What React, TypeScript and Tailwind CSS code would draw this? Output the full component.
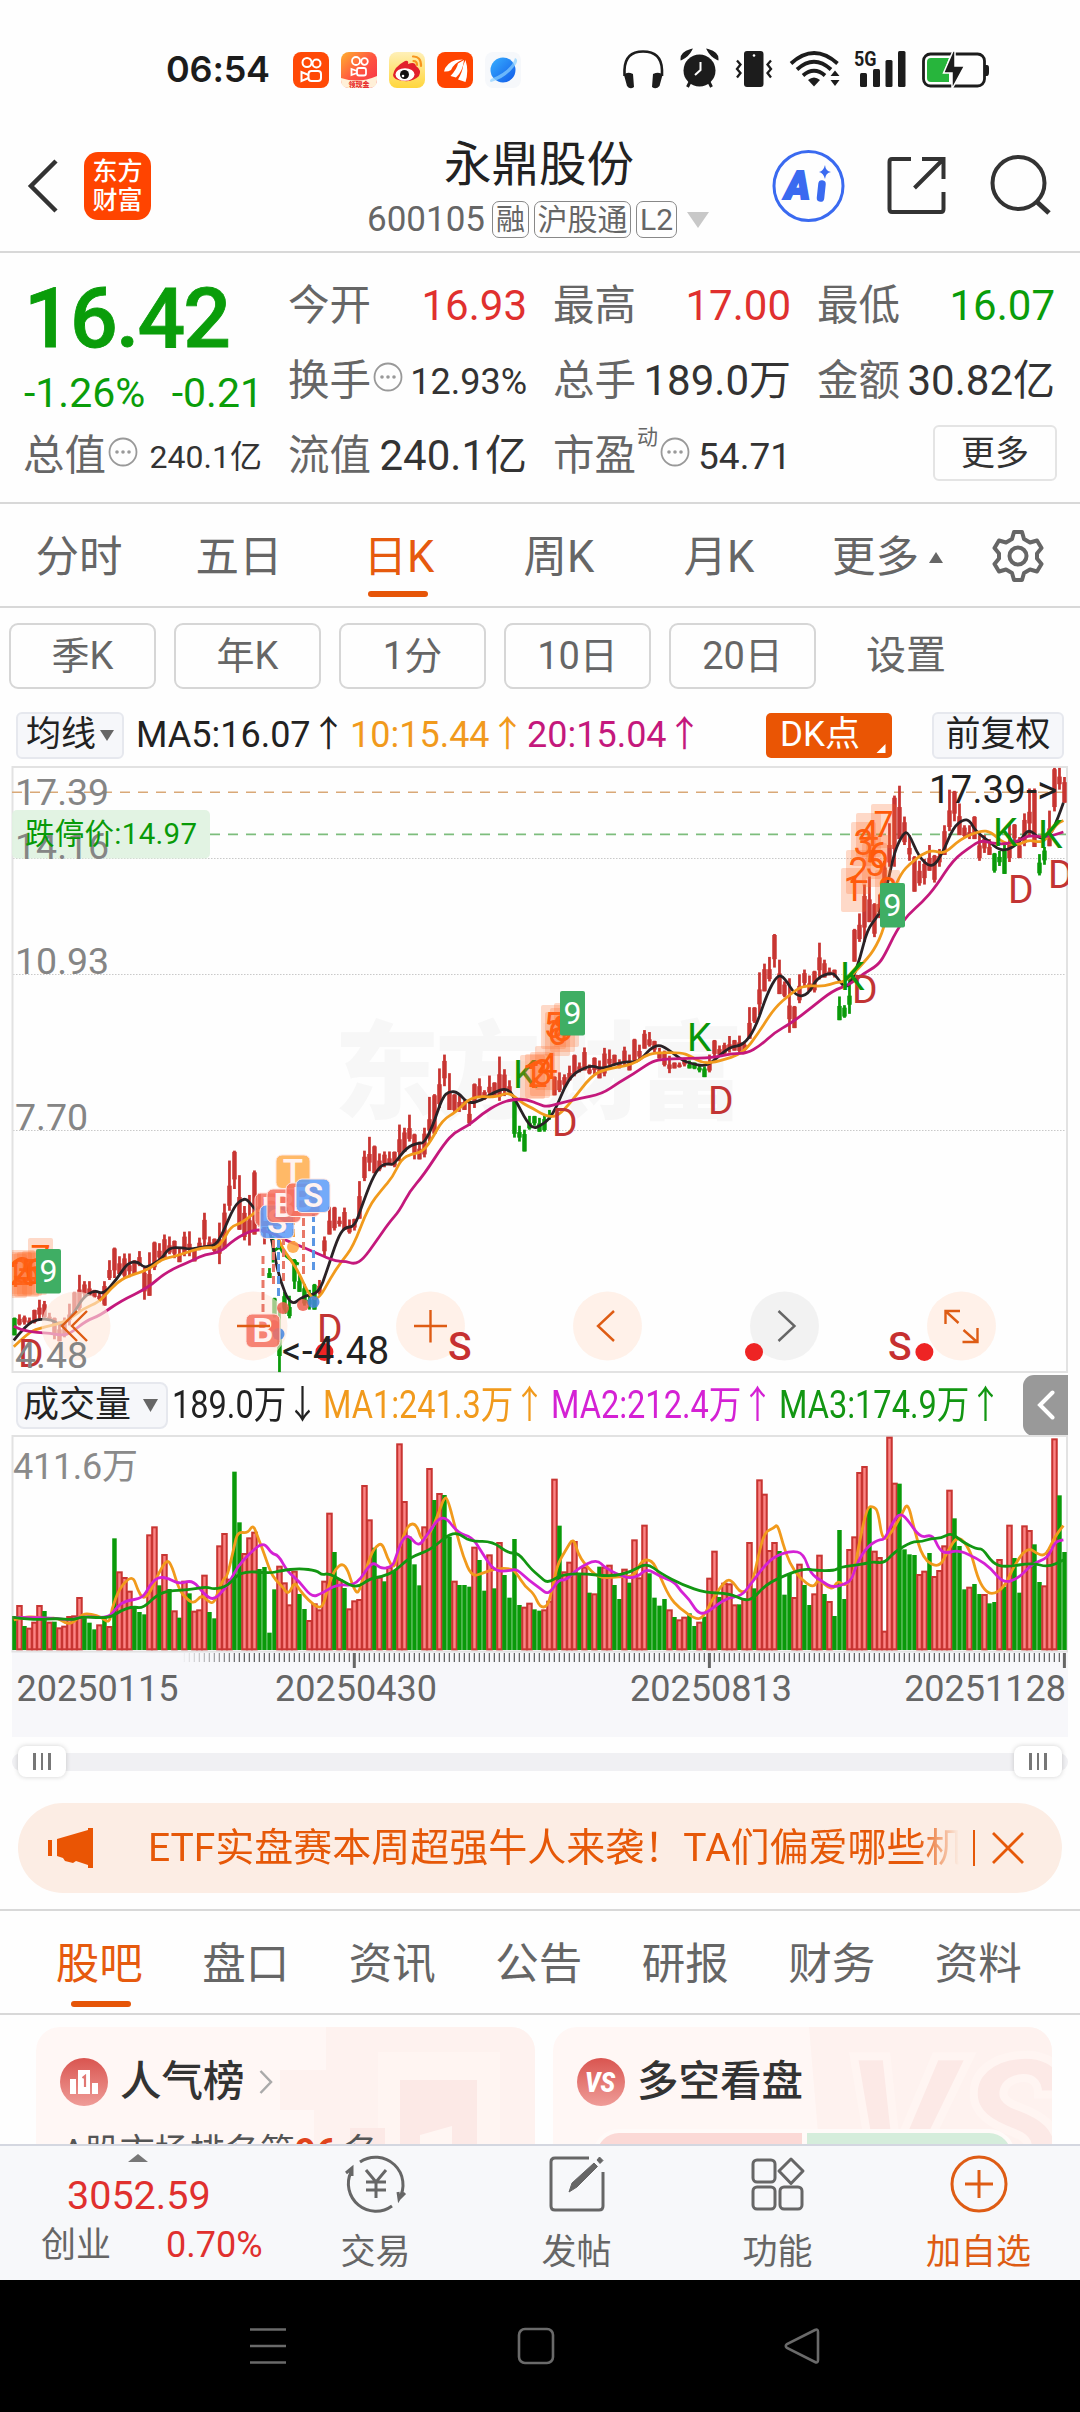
import type { ReactNode } from 'react';

const RED = '#c83532';
const GREEN = '#0a9a0a';

// Candles: high / low per trading day, chart units (y grows downwards)
const CANDLES =
  '1410 1455g,1402 1430,1405 1428,1410 1425,1390 1425,1365 1415,1368 1410,1398 1418,1410 1465,1420 1470,1410 1460,1375 1430,1345 1400,1302 1395,1318 1360,1318 1355,1340 1360,1345 1370,1318 1380,1265 1315,1233 1310,1255 1300,1248 1310,1248 1308,1265 1300,1242 1280,1280 1365,1245 1355,1218 1290,1222 1270,1200 1260,1205 1250,1215 1260,1235 1270,1193 1255,1192 1255,1235 1268,1208 1240,1145 1235,1205 1235,1210 1245,1170 1275,1122 1235,1013 1140,988 1085,1050 1188,1128 1215,1100 1228,1038 1200,1095 1180,1110 1225,1285 1310g,1360 1410g,1385 1548g,1345 1400g,1355 1412g,1262 1338g,1300 1345g,1325 1380g,1340 1390g,1325 1390g,1315 1352,1205 1255,1130 1200,1130 1190,1155 1180,1132 1188,1162 1198,1160 1190,1065 1160,988 1065,953 1040,975 1045,995 1040,990 1030,990 1025,990 1030,922 1015,930 990,897 965,945 1010,965 1010,930 1005,852 965,845 945,780 880,745 825,792 885,845 890,848 890,860 885,865 925,818 880,805 855,835 860,798 855,815 850,750 862,782 850,810 840,860 955g,925 965g,935 990g,900 935g,900 925g,905 940g,900 940g,885 910g,800 848,790 840,795 830,773 810,745 800,765 790,727 785,770 795,752 795,760 805,728 800,732 780,745 770,757 780,725 775,745 785,705 765,720 760,683 730,688 725,710 740,728 755,735 775,748 792,765 780,765 778,755 775,760 780g,765 782g,770 790g,775 802g,745 790,708 755,722 745,715 745,698 740,708 735,697 740,715 740,625 705,625 665,537 645,515 585,498 560,440 525,505 592,560 600,552 690,622 678,542 615,530 575,545 585,533 588,462 555,505 550,525 545,530 550,598 658g,620 652g,550 642g,427 510,388 460,315 460,295 410,362 448,340 400,255 340,160 270,90 270,65 200,143 215,190 255,243 333,255 318,250 315,215 280,240 310,225 270,165 240,75 180,78 155,110 190,165 195,165 200,142 200,190 255,190 235,200 240,235 285g,230 268g,215 288g,160 258,162 210,195 248,135 218,72 190,72 220,238 292g,220 265g,128 218,20 130,20 75,43 108';

const VOLUMES =
  'g768 r735 g798 r803 r785 r735 g753 r785 g785 r802 r797 r768 r766 r711 g768 g788 g808 r793 g775 r798 g535 r634 r651 r692 g738 g756 g763 r523 r499 g676 r582 g687 r751 g773 r662 g700 r752 r748 r644 g756 g775 r556 r519 r656 g335 g487 r579 r532 r515 g627 g621 g818 g688 r617 r667 r733 r632 g702 g747 r780 r730 r748 r662 r458 g576 r657 g684 r745 r721 r717 r375 r478 g563 r650 g664 r620 g633 r250 r423 g530 g613 g676 r499 r324 g420 r399 g405 g530 r662 g675 g675 g680 r560 g600 g692 r583 g685 r546 g645 g713 g537 g735 r740 r728 g748 g752 r748 r722 r356 g497 r634 r605 r543 g640 r620 g698 r700 g620 r620 r614 g675 g717 r626 g668 r538 r652 r494 g640 g713 g737 g717 r748 g771 r778 r770 g760 g798 r785 g770 r653 r572 g711 r668 r670 r733 g733 r715 r546 g685 r358 r401 r570 r546 g573 g704 g640 r711 r611 g675 g735 r700 r584 g702 r723 g768 g510 g717 r567 r529 r336 r318 g443 r572 r591 r812 r230 r368 g371 g568 g583 g585 r642 r632 g579 r648 r630 r556 r389 g475 g558 g688 r680 g672 g702 r702 g730 g726 r597 g680 r494 g594 g698 r496 r510 g553 g666 r676 r572 r235 g406 g576';

// Each average is kept as two halves, the second one starts at x = 1568
const PRICE_MA = [
  {
    color: '#2a2226',
    left: '40,1468 75,1430 110,1413 150,1415 180,1432 215,1400 240,1360 275,1340 300,1352 340,1312 370,1272 400,1268 415,1282 430,1282 470,1262 490,1233 530,1233 550,1238 600,1230 625,1228 645,1200 680,1128 705,1110 720,1112 740,1138 770,1150 790,1215 810,1310 845,1382 880,1355 925,1350 950,1290 980,1210 1000,1182 1030,1180 1050,1130 1080,1060 1105,1025 1130,1020 1142,1025 1180,980 1215,968 1230,970 1255,930 1285,852 1305,838 1330,840 1360,870 1400,860 1430,842 1475,828 1500,865 1530,915 1550,932',
    right: '0,925 25,910 50,875 70,830 95,795 130,778 155,773 180,782 240,762 285,765 320,730 345,720 370,730 410,758 440,768 475,774 500,765 550,725 590,722 625,680 660,590 690,543 710,550 745,600 780,592 805,550 850,537 865,552 885,577 905,562 930,500 950,430 980,395 990,380 1010,310 1030,230 1055,185 1070,182 1100,245 1138,275 1170,235 1200,170 1230,150 1248,153 1265,180 1310,210 1325,222 1350,230 1390,212 1418,172 1450,200 1480,195 1505,145 1520,108',
  },
  {
    color: '#f19a1c',
    left: '40,1484 80,1450 110,1438 190,1422 240,1388 290,1370 320,1338 360,1308 430,1290 470,1262 510,1255 560,1240 600,1232 625,1235 645,1220 670,1180 700,1172 735,1148 755,1135 790,1160 815,1228 845,1265 870,1300 900,1358 925,1365 960,1310 990,1270 1025,1232 1070,1130 1110,1085 1140,1055 1165,1010 1195,996 1225,992 1250,965 1285,910 1325,890 1370,850 1440,853 1470,842 1490,848 1520,870 1550,882',
    right: '0,893 30,903 55,898 90,865 150,798 190,782 270,770 310,745 345,740 410,740 435,748 475,768 520,762 590,742 635,690 680,628 730,590 765,570 825,573 860,562 890,560 930,522 970,482 1000,425 1020,340 1050,285 1075,262 1110,238 1140,228 1175,238 1220,200 1280,178 1310,182 1345,210 1390,215 1418,202 1450,208 1470,202 1500,162 1520,153',
  },
  {
    color: '#c4187c',
    left: '40,1432 60,1442 110,1448 145,1450 180,1455 205,1450 250,1418 290,1405 350,1368 430,1335 480,1296 560,1265 595,1250 640,1245 680,1212 740,1185 790,1195 830,1215 880,1232 940,1255 975,1268 1005,1268 1030,1275 1055,1262 1090,1220 1130,1170 1160,1140 1190,1090 1230,1050 1290,970 1320,942 1360,925 1400,895 1450,868 1490,858 1530,858',
    right: '0,872 20,877 50,870 110,857 180,845 230,815 270,795 320,765 350,757 420,755 500,753 560,742 600,742 640,722 680,690 730,665 790,625 850,583 900,568 940,540 980,520 1000,495 1035,432 1070,390 1110,360 1150,320 1200,252 1250,220 1280,203 1310,210 1350,213 1390,205 1420,190 1470,196 1520,182',
  },
];

const VOLUME_MA = [
  {
    color: '#f19a1c',
    left: '40,780 70,772 100,770 130,778 165,772 190,790 210,790 240,762 265,762 295,772 318,790 325,745 345,690 370,658 388,653 400,690 415,717 435,700 460,640 485,597 500,620 520,690 545,720 565,730 585,705 600,720 620,733 635,690 650,655 660,650 680,560 690,515 720,520 735,492 750,535 765,575 785,635 800,660 820,680 838,705 855,665 870,690 895,720 925,745 940,735 955,670 975,625 995,610 1010,630 1025,680 1040,705 1055,650 1075,590 1090,560 1110,548 1125,595 1145,630 1160,560 1185,492 1210,492 1225,545 1250,520 1275,455 1290,412 1300,415 1325,515 1345,590 1370,650 1400,640 1440,625 1485,625 1500,640 1525,680 1550,700',
    right: '0,742 22,740 35,690 50,615 75,570 97,532 110,580 130,612 170,655 230,650 275,650 295,600 325,600 345,640 375,710 405,745 455,780 475,770 500,720 525,680 545,658 560,665 585,702 615,680 640,560 655,515 678,505 690,492 705,550 725,610 755,655 795,685 808,655 848,693 865,660 885,680 910,650 925,560 950,440 970,440 982,455 995,545 1020,520 1050,465 1068,425 1085,500 1112,598 1160,625 1185,570 1215,525 1250,570 1270,650 1290,690 1315,705 1350,680 1375,620 1415,560 1450,585 1470,585 1495,530 1520,497',
  },
  {
    color: '#d421d4',
    left: '40,772 150,772 200,782 240,768 315,775 340,740 365,722 415,715 435,675 460,650 490,655 520,672 560,660 590,700 620,722 650,690 670,660 690,620 725,580 765,545 790,582 808,585 835,635 870,665 905,712 935,700 980,672 1035,678 1080,602 1105,627 1140,620 1150,590 1165,545 1185,522 1215,562 1240,525 1285,458 1330,520 1370,530 1395,570 1435,635 1480,632 1500,627 1535,660',
    right: '0,685 25,705 55,658 75,662 110,625 165,597 190,625 250,655 285,650 310,625 350,650 390,665 410,695 435,720 455,755 475,762 495,750 540,715 585,708 610,675 650,620 680,590 730,572 765,580 785,640 820,665 850,683 885,672 905,660 920,610 950,560 985,538 1000,540 1025,485 1045,460 1065,475 1105,535 1140,522 1160,570 1180,580 1215,570 1270,595 1310,625 1345,670 1390,655 1430,610 1475,595 1495,545 1520,540',
  },
  {
    color: '#129612',
    left: '40,772 95,780 165,775 210,780 240,770 318,775 350,752 385,740 415,745 455,705 490,692 545,690 600,680 620,688 660,680 700,632 785,640 815,632 870,625 920,632 935,645 955,640 990,660 1035,685 1075,655 1110,650 1145,635 1190,592 1250,570 1300,525 1330,518 1365,545 1430,543 1475,580 1505,578 1540,625',
    right: '0,650 22,670 60,645 120,640 210,650 265,635 310,608 350,640 415,675 480,698 550,700 595,722 620,715 650,680 690,655 765,625 800,632 855,632 870,622 940,612 965,605 1000,610 1030,575 1080,545 1110,545 1135,535 1165,535 1195,518 1225,545 1270,568 1285,565 1315,610 1350,622 1430,608 1475,622 1520,600',
  },
];

type Line = { color: string; left: string; right: string };

// Smooths a list of points with quadratic segments through the midpoints
function smooth(line: Line) {
  const parse = (s: string, dx: number) =>
    s.split(' ').map((p) => {
      const [x, y] = p.split(',').map(Number);
      return [x + dx, y];
    });
  const pts = [...parse(line.left, 0), ...parse(line.right, 1568)];
  let d = `M${pts[0][0]} ${pts[0][1]}`;
  for (let i = 1; i < pts.length - 1; i++) {
    const mx = (pts[i][0] + pts[i + 1][0]) / 2;
    const my = (pts[i][1] + pts[i + 1][1]) / 2;
    d += `Q${pts[i][0]} ${pts[i][1]} ${mx} ${my}`;
  }
  const last = pts[pts.length - 1];
  return `${d}L${last[0]} ${last[1]}`;
}

function MaLines({ lines }: { lines: Line[] }) {
  return (
    <>
      {lines.map((line) => (
        <path
          key={line.color}
          d={smooth(line)}
          fill="none"
          stroke={line.color}
          strokeWidth={2.8}
          strokeLinejoin="round"
          vectorEffect="non-scaling-stroke"
        />
      ))}
    </>
  );
}

const DK_MARKS: [string, number, number][] = [
  ['D', 18, 1367], ['D', 317, 1342], ['D', 552, 1136], ['D', 708, 1114], ['D', 852, 1003], ['D', 1008, 903], ['D', 1048, 888],
  ['K', 687, 1051], ['K', 513, 1088], ['K', 840, 990], ['K', 993, 846], ['K', 1038, 848],
];

// Nine-turn counters: digit, left, top
const COUNTS: [string, number, number][] = [
  ['1', 2, 1254], ['2', 7, 1252], ['3', 10, 1250], ['4', 14, 1253], ['5', 17, 1252], ['6', 22, 1251], ['7', 28, 1238],
  ['1', 520, 1055], ['2', 525, 1054], ['3', 530, 1052], ['4', 535, 1046], ['5', 541, 1005], ['6', 545, 1012], ['8', 550, 1008], ['6', 554, 1003],
  ['1', 841, 868], ['2', 846, 850], ['3', 851, 822], ['4', 856, 813], ['5', 862, 843], ['6', 866, 835], ['7', 871, 804], ['8', 875, 870],
];

const NINES: [number, number][] = [[36, 1249], [560, 991], [880, 883]];

const TRADES: [string, number, number, string][] = [
  ['B', 255, 1193, '#f4705f'],
  ['S', 260, 1205, '#5b9bf8'],
  ['T', 276, 1155, '#ffad4c'],
  ['B', 267, 1189, '#f4705f'],
  ['B', 286, 1183, '#f4705f'],
  ['S', 296, 1179, '#5b9bf8'],
  ['B', 246, 1314, '#f4705f'],
];

const TRADE_LEGS: [number, number, number, string][] = [
  [263, 1256, 1314, '#e87868'],
  [273.5, 1240, 1285, '#e87868'],
  [278.5, 1240, 1298, '#5b97e4'],
  [283.5, 1225, 1282, '#e87868'],
  [293.5, 1205, 1242, '#f5a23c'],
  [303.5, 1218, 1278, '#e87868'],
  [313.5, 1214, 1272, '#5b97e4'],
];

const TRADE_DOTS: [number, number, string][] = [
  [293, 1247, '#ffa43c'],
  [283, 1308, '#ee5f50'],
  [303, 1305, '#ee5f50'],
  [274, 1326, '#ee5f50'],
  [313.5, 1302, '#4385e0'],
  [278.5, 1334, '#4385e0'],
];

function PriceChart() {
  return (
    <svg viewBox="0 760 1080 614" className="block h-[614px] w-[1080px]">
      <clipPath id="priceClip">
        <rect x="12" y="766" width="1056" height="608" />
      </clipPath>
      <text x="334" y="1110" fontSize="106" fontWeight="900" fill="#f7f7f7" textLength="410">东方财富</text>
      {[858.5, 974.5, 1130.5].map((y) => (
        <path key={y} d={`M13 ${y}H1067`} stroke="#c9c9c9" strokeWidth="1" strokeDasharray="1.5 1.5" />
      ))}
      <rect x="12.5" y="767" width="1054.5" height="605" fill="none" stroke="#e2e2e2" strokeWidth="2" />
      <path d="M12 792.3H1067" stroke="#d9a877" strokeWidth="1.5" strokeDasharray="10 8" />
      <path d="M210 834.3H1067" stroke="#7dbd7d" strokeWidth="1.8" strokeDasharray="10 8" />
      <g clipPath="url(#priceClip)">
        <g transform="translate(0 760) scale(0.34436 0.39541)">
          {CANDLES.split(',').map((c, i) => {
            const green = c.endsWith('g');
            const [hi, lo] = c.replace('g', '').split(' ').map(Number);
            const x = 42 + i * 14.52;
            const h = lo - hi;
            const top = hi + h * [0.03, 0.4, 0.2, 0.5][i % 4];
            const bottom = lo - h * [0, 0.1, 0.25][i % 3];
            return (
              <g key={i} fill={green ? GREEN : RED}>
                <rect x={x - 4} y={hi} width="8" height={h} />
                <rect x={x - 6.5} y={top} width="13" height={bottom - top} />
              </g>
            );
          })}
          <rect x="789" y="1205" width="8" height="66" fill={GREEN} />
          <path d="M797 1240L812 1232L825 1250L850 1268L868 1275" fill="none" stroke={GREEN} strokeWidth="8" />
          <MaLines lines={PRICE_MA} />
        </g>
        {DK_MARKS.map(([t, x, y], i) => (
          <text key={i} x={x} y={y} fontSize="39" fill={t === 'D' ? '#c23434' : '#0a960a'}>{t}</text>
        ))}
        {COUNTS.map(([t, x, y], i) => (
          <g key={i}>
            <rect x={x} y={y} width="25" height="44" rx="2" fill="#ff6a26" fillOpacity="0.25" />
            <text x={x + 12.5} y={y + 33} fontSize="36" textAnchor="middle" fill="#ff5a0a">{t}</text>
          </g>
        ))}
      </g>
      {NINES.map(([x, y]) => (
        <g key={x}>
          <rect x={x} y={y} width="25" height="44.5" rx="2" fill="#3fae64" />
          <text x={x + 12.5} y={y + 33} fontSize="32" textAnchor="middle" fill="#fff">9</text>
        </g>
      ))}

      {/* Floating chart controls */}
      <g fill="none" stroke="#de5c14" strokeWidth="2.4">
        {[76, 253, 430.5, 607.5, 961.5].map((cx) => (
          <circle key={cx} cx={cx} cy="1326" r="34.5" fill="#ffe8dc" fillOpacity="0.62" stroke="none" />
        ))}
        <circle cx="784.5" cy="1326" r="34.5" fill="#f0f0f0" fillOpacity="0.85" stroke="none" />
        <path d="M77 1311L62 1326L77 1341M87 1311L72 1326L87 1341" />
        <path d="M414 1326H447M430.5 1310V1342.5" />
        <path d="M614 1311L598 1326L614 1341" />
        <path d="M778.5 1311L794.5 1326L778.5 1341" stroke="#666" />
        <path d="M945.5 1324V1311H960M946 1311.5L958.5 1323M963.5 1330L976.5 1341.5M962.5 1342H977.5V1328" />
      </g>

      {/* Trades */}
      {TRADE_LEGS.map(([x, y1, y2, color]) => (
        <path key={x} d={`M${x} ${y1}V${y2}`} stroke={color} strokeWidth="3" strokeDasharray="8 4" />
      ))}
      {TRADE_DOTS.map(([x, y, color]) => (
        <circle key={x} cx={x} cy={y} r="6" fill={color} fillOpacity="0.85" />
      ))}
      {TRADES.map(([t, x, y, color], i) => (
        <g key={i}>
          <rect x={x} y={y} width="34" height="33.5" rx="6" fill={color} fillOpacity="0.85" stroke="#ffe6e0" strokeWidth="1" />
          <text x={x + 17} y={y + 28} fontSize="33" fontWeight="600" textAnchor="middle" fill="#fff2f0">{t}</text>
        </g>
      ))}
      <path d="M237 1326H270" stroke="#de5c14" strokeWidth="2.4" />

      <g fontSize="37.5" fill="#858585">
        <text x="15" y="804.5">17.39</text>
        <rect x="12" y="810" width="198" height="48.5" rx="5" fill="#dff2e0" fillOpacity="0.9" />
        <text x="15" y="859">14.16</text>
        <text x="15" y="974">10.93</text>
        <text x="15" y="1130">7.70</text>
        <text x="15" y="1368">4.48</text>
      </g>
      <text x="25" y="844" fontSize="29.5" fill="#089a08" textLength="172">跌停价:14.97</text>
      {[324.4, 754, 924.4].map((x) => (
        <circle key={x} cx={x} cy="1352" r="9" fill="#ee2424" />
      ))}
      <g fontSize="39" fill="#c63030" fontWeight="500">
        <text x="448" y="1360">S</text>
        <text x="888" y="1360">S</text>
      </g>
      <g fontSize="38" fill="#222">
        <text x="282" y="1364" textLength="107">&lt;-4.48</text>
        <text x="929" y="803" textLength="128">17.39-&gt;</text>
      </g>
    </svg>
  );
}

function VolumeChart() {
  return (
    <svg viewBox="0 1434 1080 304" className="block h-[304px] w-[1080px]">
      <defs>
        <linearGradient id="tickFade" x1="180" x2="240" y1="0" y2="0" gradientUnits="userSpaceOnUse">
          <stop offset="0" stopColor="#666" stopOpacity="0" />
          <stop offset="1" stopColor="#666" />
        </linearGradient>
      </defs>
      <rect x="12" y="1652" width="1056" height="85" fill="#f7f7fa" />
      <rect x="12.5" y="1436" width="1054.5" height="215.5" fill="none" stroke="#e2e2e2" strokeWidth="2" />
      <text x="13" y="1479" fontSize="36" fill="#8a8a8a" textLength="125">411.6万</text>
      <g transform="translate(0 1360) scale(0.34436 0.33333)">
        {VOLUMES.split(' ').map((v, i) => {
          const top = Number(v.slice(1));
          const x = 42 + i * 14.52;
          return v[0] === 'g' ? (
            <rect key={i} x={x - 6.5} y={top} width="13" height={870 - top} fill="#0a9a0a" />
          ) : (
            <rect key={i} x={x - 6.5} y={top + 3} width="13" height={865 - top} fill="#fc8585" stroke={RED} strokeWidth="6" />
          );
        })}
        <MaLines lines={VOLUME_MA} />
      </g>
      {Array.from({ length: 178 }, (_, i) => (
        <rect key={i} x={178.7 + i * 5} y="1653" width="1.3" height="9" fill="url(#tickFade)" />
      ))}
      {[354.3, 709.4, 1064.4].map((x) => (
        <rect key={x} x={x - 1.5} y="1653" width="3" height="15" fill="#666" />
      ))}
      <g fontSize="36" fill="#666">
        <text x="16.5" y="1701">20250115</text>
        <text x="275" y="1701">20250430</text>
        <text x="630" y="1701">20250813</text>
        <text x="1066" y="1701" textAnchor="end">20251128</text>
      </g>
    </svg>
  );
}

function StatusBar() {
  return (
    <div className="flex h-[121px] items-start pl-[166px] pt-[50px] text-[#1c1c1c]">
      <div className="w-[127px] font-[Inter] text-[36px] font-semibold leading-[38px] tracking-[-0.2px]">06:54</div>
      <svg viewBox="293 52 230 36" className="mt-[2px] h-[36px] w-[230px] shrink-0">
        <defs>
          <linearGradient id="ks2" x1="0" y1="0" x2="1" y2="1">
            <stop offset="0" stopColor="#ffb02e" />
            <stop offset="0.5" stopColor="#ff5540" />
            <stop offset="1" stopColor="#f5304a" />
          </linearGradient>
          <linearGradient id="wb" x1="0" y1="0" x2="0" y2="1">
            <stop offset="0" stopColor="#fff0b8" />
            <stop offset="1" stopColor="#ffd63c" />
          </linearGradient>
          <linearGradient id="planet" x1="0" y1="0" x2="1" y2="1">
            <stop offset="0" stopColor="#38b0ff" />
            <stop offset="1" stopColor="#1058e8" />
          </linearGradient>
        </defs>
        <rect x="293" y="52" width="36" height="36" rx="8" fill="#ff4906" />
        <g fill="none" stroke="#fff" strokeWidth="2">
          <circle cx="307" cy="62.5" r="4.5" />
          <circle cx="316.5" cy="63.5" r="4" />
          <rect x="308.5" y="71" width="12.5" height="10" rx="3" />
          <path d="M308.5 75L301.5 72V81L308.5 78" />
        </g>
        <rect x="341" y="52" width="36" height="36" rx="8" fill="url(#ks2)" />
        <g fill="none" stroke="#fff" strokeWidth="1.8">
          <circle cx="356" cy="61" r="4" />
          <circle cx="364.5" cy="61.5" r="3.3" />
          <rect x="357" y="68" width="9" height="7.5" rx="2" />
          <path d="M357 71L351.5 69V75L357 73" />
        </g>
        <path d="M341 78Q359 84 377 76V80Q377 88 369 88H349Q341 88 341 80Z" fill="#fff0d8" />
        <text x="359" y="86.5" fontSize="7" fontWeight="900" textAnchor="middle" fill="#e83030">领现金</text>
        <rect x="389" y="52" width="36" height="36" rx="8" fill="url(#wb)" />
        <path d="M393 75Q394 67 405 61Q409 60 408 64Q415 61 416 66Q422 70 419 76Q413 82 404 81Q393 80 393 75Z" fill="#e2202c" />
        <ellipse cx="405" cy="74.5" rx="9.5" ry="6.3" fill="#fff" />
        <circle cx="404.5" cy="74.5" r="4.5" fill="#111" />
        <circle cx="403" cy="76" r="1.3" fill="#fff" />
        <path d="M413 56.5Q421 56 421 66M413.5 61Q417 61 417 65" fill="none" stroke="#f7951d" strokeWidth="2.2" strokeLinecap="round" />
        <rect x="437" y="52" width="36" height="36" rx="8" fill="#ff4400" />
        <path d="M444 71.5Q446 63 456 60L463 59.5Q454 63 451 70Q448 72 444 71.5Z" fill="#fff" />
        <path d="M450.5 76Q457 69 458 63.5L464 60Q463 71 456 77.5Z" fill="#fff" />
        <path d="M458 79.5Q462.500 72 463 66L465.5 60Q469 71 465.5 82Z" fill="#fff" />
        <rect x="485" y="52" width="36" height="36" rx="8" fill="#f6f8fb" />
        <circle cx="503" cy="70" r="12.5" fill="url(#planet)" />
        <path d="M491 79Q511 71 515 58Q520 60 513 68Q504 79 491 82Q489 81 491 79Z" fill="#8cd0ff" fillOpacity="0.7" />
      </svg>
      <svg viewBox="620 48 372 42" className="ml-[97px] mt-[-2px] h-[42px] w-[372px] shrink-0" fill="#1c1c1c">
        <path d="M624.5 76V70Q625 51.5 643 51.5Q661.5 51.5 662 70V76" fill="none" stroke="#1c1c1c" strokeWidth="2.6" />
        <path d="M624 75Q627 71 633 74L634 87Q630 90 627 86ZM662.5 75Q659.5 71 653 74L652 87Q656 90 659.5 86Z" />
        <circle cx="699.5" cy="70.5" r="16" />
        <path d="M681.5 59Q681 53 691 50Q688 56 681.5 59ZM717.5 59Q718 53 708 50Q711 56 717.5 59Z" stroke="#1c1c1c" strokeWidth="2" />
        <path d="M690 82L687.5 87M709 82L711.5 87" stroke="#1c1c1c" strokeWidth="3" />
        <path d="M700.5 62V70L695 75" fill="none" stroke="#fff" strokeWidth="2" />
        <rect x="744" y="51" width="19.5" height="36" rx="3" />
        <circle cx="754" cy="55.5" r="1.3" fill="#fff" />
        <path d="M737 60.5L740.5 64.5L737 69L740.5 73L737 77.5M771 60.5L767.5 64.5L771 69L767.5 73L771 77.5" fill="none" stroke="#1c1c1c" strokeWidth="2.3" />
        <g fill="none" stroke="#1c1c1c" strokeWidth="3.8">
          <path d="M791 63.5Q814 42.5 837.5 63.5" />
          <path d="M797 69.5Q814 54 831 69.5" />
          <path d="M803 75.5Q814 66 825 75.5" />
        </g>
        <path d="M808 80Q814 75 820 80L814 86.5Z" />
        <path d="M830.5 76L835 70.5L839.5 76ZM830.5 80H839.5L835 86Z" />
        <text x="854" y="65.5" fontSize="20" fontWeight="700" textLength="22.5" lengthAdjust="spacingAndGlyphs">5G</text>
        <rect x="860" y="73" width="7" height="14" rx="1.5" />
        <rect x="873" y="69" width="7" height="18" rx="1.5" />
        <rect x="885.5" y="60" width="7" height="27" rx="1.5" />
        <rect x="898" y="51" width="7.5" height="36" rx="1.5" />
        <rect x="923.5" y="54" width="61" height="32" rx="7" fill="none" stroke="#1c1c1c" strokeWidth="2.8" />
        <path d="M984.5 65H987Q989 65 989 68V72Q989 76 987 76H984.5Z" />
        <path d="M927 62Q927 58 931 58H949L944 72H949V82H931Q927 82 927 78Z" fill="#27b53c" />
        <path d="M953 51L943.5 73H952V89L964.5 66H955V51Z" stroke="#fff" strokeWidth="1.5" />
      </svg>
    </div>
  );
}

function Header() {
  return (
    <header className="flex h-[132px] items-center border-b-2 border-[#d8d8d8] pl-[27px]">
      <svg viewBox="0 0 32 54" className="h-[54px] w-[32px]">
        <path d="M29 2L4 27L29 52" fill="none" stroke="#333" strokeWidth="4.5" />
      </svg>
      <div className="ml-[25px] flex h-[68px] w-[67px] flex-col items-center justify-center rounded-[14px] bg-[#ff4400] text-[25px] font-medium leading-[29px] text-white">
        <span>东方</span>
        <span>财富</span>
      </div>
      <div className="ml-[216px] w-[344px]">
        <div className="-mt-[3px] pl-[77px] text-[47.5px] leading-[60px] text-[#222]">永鼎股份</div>
        <div className="-mb-[4px] mt-[6px] flex items-center gap-[5px] text-[35px] leading-[36px] text-[#666]">
          <span className="w-[120px]">600105</span>
          <span className="flex h-[37px] w-[37px] items-center justify-center rounded-[7px] border border-[#888] text-[29px]">融</span>
          <span className="flex h-[37px] w-[97px] items-center justify-center rounded-[7px] border border-[#888] text-[30px]">沪股通</span>
          <span className="flex h-[37px] w-[41px] items-center justify-center rounded-[7px] border border-[#888] text-[30px]">L2</span>
          <svg viewBox="0 0 22 16" className="ml-[5px] h-[16px] w-[22px]">
            <path d="M0 0H22L11 16Z" fill="#c8c8c8" />
          </svg>
        </div>
      </div>
      <svg viewBox="772 148 280 76" className="ml-[61px] h-[76px] w-[280px] shrink-0" fill="none">
        <circle cx="808.5" cy="186" r="34.5" stroke="#3a6af0" strokeWidth="3" />
        <text x="785" y="199" fontSize="38" fontWeight="900" fontStyle="italic" fill="#3a6af0" stroke="#3a6af0" strokeWidth="2">A</text>
        <path d="M822 184L820.5 198" stroke="#3a6af0" strokeWidth="7.5" strokeLinecap="round" />
        <path d="M825 165Q825.5 171 831 172Q825.5 173 825 179Q823.5 173 819 172Q823.5 171 825 165Z" fill="#3a6af0" />
        <g stroke="#333" strokeWidth="4">
          <path d="M911 159H892Q889.5 159 889.5 162V209Q889.5 212 892 212H941Q943.5 212 943.5 209V192" />
          <path d="M922 159H943.5V179M943 159.5L914.5 188" />
          <circle cx="1018.5" cy="183" r="26" />
          <path d="M1037 202L1049 213" strokeWidth="5" />
        </g>
      </svg>
    </header>
  );
}

function Dots() {
  return (
    <svg viewBox="0 0 30 30" className="h-[30px] w-[30px] shrink-0" fill="#999">
      <circle cx="15" cy="15" r="13.5" fill="none" stroke="#999" strokeWidth="1.8" />
      <circle cx="9" cy="15" r="1.8" />
      <circle cx="15" cy="15" r="1.8" />
      <circle cx="21" cy="15" r="1.8" />
    </svg>
  );
}

function Cell({ label, children, dots, sup }: { label: string; children: ReactNode; dots?: boolean; sup?: string }) {
  return (
    <div className="flex h-[75px] items-center whitespace-nowrap text-[42px] leading-[50px] text-[#333]">
      <span className="-ml-px text-[41.5px] text-[#666]">{label}</span>
      {sup && <span className="-mt-[38px] ml-px text-[21px] leading-[24px] text-[#666]">{sup}</span>}
      {dots && <div className="-mt-[8px] ml-[2px]"><Dots /></div>}
      <div className="ml-auto">{children}</div>
    </div>
  );
}

function Quote() {
  return (
    <section className="grid h-[251px] grid-cols-[238px_238px_237px_237px] gap-x-[27px] border-b-2 border-[#d8d8d8] pl-[24px] pt-[15px]">
      <div>
        <div className="h-[150px] text-[#0a9d0a]">
          <div className="pt-[9px] text-[84px] font-medium leading-[84px] tracking-[-1.8px] [-webkit-text-stroke:0.8px_#0a9d0a]">16.42</div>
          <div className="-mr-[1px] flex justify-between pt-[9px] text-[41px] leading-[46px]">
            <span>-1.26%</span>
            <span>-0.21</span>
          </div>
        </div>
        <Cell label="总值" dots><span className="text-[32px]">240.1亿</span></Cell>
      </div>
      <div>
        <Cell label="今开"><span className="text-[#e0302e]">16.93</span></Cell>
        <Cell label="换手" dots><span className="text-[36px]">12.93%</span></Cell>
        <Cell label="流值">240.1亿</Cell>
      </div>
      <div>
        <Cell label="最高"><span className="text-[#e0302e]">17.00</span></Cell>
        <Cell label="总手">189.0万</Cell>
        <Cell label="市盈" sup="动" dots><span className="text-[37px]">54.71</span></Cell>
      </div>
      <div>
        <Cell label="最低"><span className="text-[#0a9d0a]">16.07</span></Cell>
        <Cell label="金额">30.82亿</Cell>
        <div className="-mr-[2px] ml-auto mt-[7px] flex h-[56px] w-[124px] items-center justify-center rounded-[6px] border-2 border-[#e4e4e4] text-[34px] text-[#333]">更多</div>
      </div>
    </section>
  );
}

function PeriodTabs() {
  const tabs = ['分时', '五日', '日K', '周K', '月K'];
  return (
    <nav className="flex h-[104px] items-center border-b-2 border-[#d8d8d8] pt-[5px] text-[43.5px] text-[#666]">
      <div className="-ml-px flex">
        {tabs.map((t) => (
          <div key={t} className={t === '日K' ? 'relative w-[160px] text-center text-[#e65a0e]' : 'w-[160px] text-center'}>
            {t}
            {t === '日K' && <span className="absolute -bottom-[7px] left-[49px] h-[6px] w-[60px] rounded-full bg-[#e65508]" />}
          </div>
        ))}
      </div>
      <div className="ml-[33px] flex items-center gap-[10px]">
        更多
        <svg viewBox="0 0 14 11" className="h-[11px] w-[14px]"><path d="M0 11H14L7 0Z" fill="#666" /></svg>
      </div>
      <svg viewBox="0 0 54 54" className="-mt-[4px] ml-[48px] h-[54px] w-[54px]" fill="none" stroke="#666" strokeWidth="4" strokeLinejoin="round">
        <path d="M23 3H31L33 10L39 13.5L46 11.5L50.5 19L46 24.5V29.5L50.5 35L46 42.5L39 40.5L33 44L31 51H23L21 44L15 40.5L8 42.5L3.5 35L8 29.5V24.5L3.5 19L8 11.5L15 13.5L21 10Z" />
        <circle cx="27" cy="27" r="8.5" />
      </svg>
    </nav>
  );
}

function Indicators() {
  return (
    <div className="flex h-[71px] items-center whitespace-pre pl-[16px] pr-[16px] pt-[21px] text-[35px] leading-[44px] text-[#222]">
      <div className="flex h-[47px] w-[108px] items-center justify-center gap-[4px] rounded-[6px] border-2 border-[#e6e8ee] bg-[#f6f7fa]">
        均线
        <svg viewBox="0 0 14 11" className="h-[11px] w-[14px]"><path d="M0 0H14L7 11Z" fill="#666" /></svg>
      </div>
      <span className="ml-[12px] w-[214px] text-[36px]">MA5:16.07↑</span>
      <span className="w-[177px] text-[36px] text-[#f19a1c]">10:15.44↑</span>
      <span className="text-[36px] text-[#c4187c]">20:15.04↑</span>
      <div className="relative ml-auto flex h-[45px] w-[126px] items-center rounded-[5px] bg-[#ea5504] pl-[14px] text-white">
        DK点
        <svg viewBox="0 0 11 11" className="absolute bottom-[5px] right-[6px] h-[9px] w-[10px]"><path d="M11 0V11H0Z" fill="#fff" /></svg>
      </div>
      <div className="ml-[40px] flex h-[47px] w-[132px] items-center justify-center rounded-[6px] border-2 border-[#e6e8ee] bg-[#f6f7fa]">前复权</div>
    </div>
  );
}

function VolumeHeader() {
  const items = [
    { text: 'MA1:241.3万↑', cls: 'w-[228px] text-[#f19a1c]' },
    { text: 'MA2:212.4万↑', cls: 'w-[228px] text-[#d421d4]' },
    { text: 'MA3:174.9万↑', cls: 'w-[228px] text-[#129612]' },
  ];
  return (
    <div className="flex h-[60px] items-center whitespace-nowrap pl-[16px] pr-[12px] pt-[2px] text-[36px] text-[#222]">
      <div className="flex h-[47px] w-[152px] items-center rounded-[8px] border-2 border-[#e6e8ee] bg-[#f6f7fa] pl-[5px]">
        成交量
        <svg viewBox="0 0 15 13" className="ml-[12px] h-[13px] w-[15px]"><path d="M0 0H15L7.5 13Z" fill="#666" /></svg>
      </div>
      <div className="ml-[4px] w-[151px]">
        <div className="origin-left scale-x-[0.845] text-[38.5px]">189.0万↓</div>
      </div>
      {items.map((it) => (
        <div key={it.text} className={it.cls}>
          <div className="origin-left scale-x-[0.845] text-[38.5px]">{it.text}</div>
        </div>
      ))}
      <div className="ml-auto flex h-[61px] w-[45px] items-center justify-center rounded-l-[11px] bg-[#999]">
        <svg viewBox="0 0 18 30" className="h-[30px] w-[18px]"><path d="M15.5 2.5L3 15L15.5 27.5" fill="none" stroke="#fff" strokeWidth="4" strokeLinecap="round" /></svg>
      </div>
    </div>
  );
}

function Handle() {
  return (
    <div className="flex h-[31px] w-[48px] items-center justify-center gap-[5px] rounded-[8px] bg-white shadow-[0_0_5px_rgba(0,0,0,0.18)]">
      <i className="h-[17px] w-[2.5px] bg-[#777]" />
      <i className="h-[17px] w-[2.5px] bg-[#777]" />
      <i className="h-[17px] w-[2.5px] bg-[#777]" />
    </div>
  );
}

function Banner() {
  return (
    <div className="mx-[18px] mt-[26px] flex h-[90px] items-center rounded-full bg-[#fcede4] pl-[30px] pr-[36px] text-[#e65808]">
      <svg viewBox="0 0 46 40" className="h-[40px] w-[46px] shrink-0" fill="#ea5504">
        <path d="M0 12H4V28H0ZM9 11L40 2V0H45V40H40V37L28 33L25 35L17 33L15 30L9 28Z" />
      </svg>
      <div className="ml-[54px] w-[811px] overflow-hidden whitespace-nowrap text-[39px] leading-[56px] [mask-image:linear-gradient(90deg,#000_95%,transparent_100%)]">
        ETF实盘赛本周超强牛人来袭！TA们偏爱哪些机构
      </div>
      <div className="ml-[14px] h-[36px] w-[1.5px] bg-[#e65808]" />
      <svg viewBox="0 0 32 32" className="ml-[17px] h-[32px] w-[32px] shrink-0"><path d="M1 1L31 31M31 1L1 31" stroke="#e65808" strokeWidth="2.8" /></svg>
    </div>
  );
}

function InfoTabs() {
  const tabs = ['股吧', '盘口', '资讯', '公告', '研报', '财务', '资料'];
  return (
    <nav className="mt-[16px] flex h-[106px] items-center border-y-2 border-[#d8d8d8] pl-[26px] pt-[6px] text-[43.5px] text-[#666]">
      {tabs.map((t, i) => (
        <div key={t} className={i === 0 ? 'relative w-[146.5px] text-center text-[#e65a0e]' : 'w-[146.5px] text-center'}>
          {t}
          {i === 0 && <span className="absolute -bottom-[9px] left-[45px] h-[6px] w-[60px] rounded-full bg-[#e65508]" />}
        </div>
      ))}
    </nav>
  );
}

function Cards() {
  return (
    <div className="flex h-[129px] gap-[18px] overflow-hidden pl-[36px] pt-[12px]">
      <div className="relative h-[200px] w-[499px] overflow-hidden rounded-[24px] bg-[#fff7f5]">
        <svg viewBox="36 2027 499 200" className="absolute inset-0 h-[200px] w-[499px]">
          <path d="M326 2027H535V2227H314V2110H280V2070H326Z" fill="#fef2ef" />
          <path d="M378 2052H500V2227H378Z" fill="#fff5f2" />
          <path d="M400 2080H477V2227H400ZM350 2128H385V2227H350Z" fill="#fce9e6" />
          <path d="M420 2135L452 2126V2227H420Z" fill="#fff6f3" />
        </svg>
        <div className="relative flex items-center pl-[24px] pt-[25px]">
          <svg viewBox="0 0 48 48" className="h-[48px] w-[48px]">
            <defs>
              <linearGradient id="disc" x1="0" y1="0" x2="0" y2="1">
                <stop offset="0" stopColor="#d95550" />
                <stop offset="1" stopColor="#ef9c98" />
              </linearGradient>
            </defs>
            <circle cx="24" cy="24" r="24" fill="url(#disc)" />
            <path d="M10 21H16V36H10ZM18 12H30V36H18ZM32 25H38V36H32Z" fill="#fff" />
            <path d="M22.5 20L25 18V29" fill="none" stroke="#e07772" strokeWidth="2.2" />
          </svg>
          <span className="ml-[12px] text-[41.5px] font-medium leading-[60px] text-[#333]">人气榜</span>
          <svg viewBox="0 0 14 24" className="ml-[14px] h-[24px] w-[14px]"><path d="M1.5 1L12 12L1.5 23" fill="none" stroke="#aaa" strokeWidth="2.5" /></svg>
        </div>
        <div className="relative pl-[26px] pt-[17px] text-[35px] leading-[48px] text-[#555]">
          A股市场排名第<b className="mr-[6px] text-[37px] leading-none text-[#e0441c]">96</b>名
        </div>
      </div>
      <div className="relative h-[200px] w-[499px] overflow-hidden rounded-[24px] bg-[#fff7f5]">
        <svg viewBox="553 2027 499 200" className="absolute inset-0 h-[200px] w-[499px]">
          <path d="M809 2027H1052V2227H826Z" fill="#fef2ef" />
          <text x="842" y="2184" fontSize="180" fontWeight="900" fontStyle="italic" fill="#fce9e6" stroke="#fff5f2" strokeWidth="8">VS</text>
        </svg>
        <div className="relative flex items-center pl-[24px] pt-[25px]">
          <svg viewBox="0 0 48 48" className="h-[48px] w-[48px]">
            <circle cx="24" cy="24" r="24" fill="url(#disc)" />
            <text x="23" y="34" fontSize="27" fontWeight="900" fontStyle="italic" textAnchor="middle" fill="#fff" textLength="30" lengthAdjust="spacingAndGlyphs">VS</text>
          </svg>
          <span className="ml-[12px] text-[41.5px] font-medium leading-[60px] text-[#333]">多空看盘</span>
        </div>
        <div className="relative ml-[40px] mt-[17px] flex h-[60px] w-[422px] gap-[5px] overflow-hidden rounded-t-[26px] border-4 border-[#fffaf8] bg-[#fffaf8]">
          <div className="flex-1 bg-[#fbd9d6]" />
          <div className="flex-1 bg-[#d5eddb]" />
        </div>
      </div>
    </div>
  );
}

function Action({ label, children, active }: { label: string; children: ReactNode; active?: boolean }) {
  return (
    <div className={active ? 'flex w-[201px] flex-col items-center text-[#de5c14]' : 'flex w-[201px] flex-col items-center text-[#666]'}>
      <svg viewBox="0 0 64 60" className="mt-[8px] h-[60px] w-[64px]" fill="none" stroke="currentColor" strokeWidth="3">
        {children}
      </svg>
      <span className="mt-[14px] text-[35px] leading-[50px]">{label}</span>
    </div>
  );
}

function BottomBar() {
  return (
    <div className="flex h-[136px] border-t-2 border-[#d4d7e0] bg-[#f7f8fa]">
      <div className="w-[275px] text-[#e0302e]">
        <svg viewBox="0 0 20 8" className="ml-[128px] mt-[8px] h-[8px] w-[20px]"><path d="M0 8H20L10 0Z" fill="#777" /></svg>
        <div className="pl-[67px] pt-[9px] text-[39.5px] leading-[50px]">3052.59</div>
        <div className="flex items-center pl-[41px] text-[36px] leading-[50px]">
          <span className="w-[125px] text-[35px] text-[#666]">创业</span>
          <span className="-mt-[2px]">0.70%</span>
        </div>
      </div>
      <Action label="交易">
        <path d="M16 8A27.5 27.5 0 0 1 55 45L54 38M55 45L61 39M48 52A27.5 27.5 0 0 1 7 18L8 15M2 19L8 14V22" />
        <path d="M22 16L32 28L42 16M32 28V44M22 28H42M22 36H42" />
      </Action>
      <Action label="发帖">
        <path d="M44 4H10Q6 4 6 8V52Q6 56 10 56H54Q58 56 58 52V18" />
        <path d="M24 38L27 29L49 9L52.5 12.5L32 33ZM52 6L54.5 3L58 6.5L55 9.5Z" fill="currentColor" strokeWidth="1" />
      </Action>
      <Action label="功能">
        <rect x="7" y="6" width="22" height="22" rx="4" />
        <rect x="7" y="33" width="22" height="22" rx="4" />
        <rect x="34" y="33" width="22" height="22" rx="4" />
        <path d="M45 5L57 17L45 29.5L33 17Z" strokeLinejoin="round" />
      </Action>
      <Action label="加自选" active>
        <circle cx="32" cy="30" r="27" />
        <path d="M18 30H46M32 16V44" />
      </Action>
    </div>
  );
}

export default function App() {
  const chips = ['季K', '年K', '1分', '10日', '20日'];
  return (
    <div className="h-[2412px] w-[1080px] overflow-hidden bg-[#fefefe] font-[Roboto,'Noto_Sans_CJK_SC',sans-serif]">
      <StatusBar />
      <Header />
      <Quote />
      <PeriodTabs />
      <div className="flex h-[81px] items-end gap-[18px] pl-[9px] text-[38px] leading-none text-[#666]">
        {chips.map((c) => (
          <div key={c} className="flex h-[66px] w-[147px] items-center justify-center rounded-[9px] border-2 border-[#d6d6d6]">{c}</div>
        ))}
        <div className="flex h-[66px] items-center pl-[32px] text-[40px]">设置</div>
      </div>
      <Indicators />
      <PriceChart />
      <VolumeHeader />
      <VolumeChart />
      <div className="mx-[12px] mt-[8px] flex h-[31px] items-center">
        <div className="flex h-[18px] flex-1 items-center justify-between rounded-full bg-[#f0f0f3] px-[6px]">
          <Handle />
          <Handle />
        </div>
      </div>
      <Banner />
      <InfoTabs />
      <Cards />
      <BottomBar />
      <div className="h-[132px] bg-black">
        <svg viewBox="0 0 1080 132" className="block h-[132px] w-[1080px]" fill="none" stroke="#6a6a6a" strokeWidth="2.6">
          <path d="M250 49.5H286M250 66H286M250 82.5H286" />
          <rect x="519" y="49" width="34" height="34" rx="6" />
          <path d="M815 50Q818 48.5 818 52V80Q818 83.5 815 82L787 68Q784.5 66 787 64Z" />
        </svg>
      </div>
    </div>
  );
}
